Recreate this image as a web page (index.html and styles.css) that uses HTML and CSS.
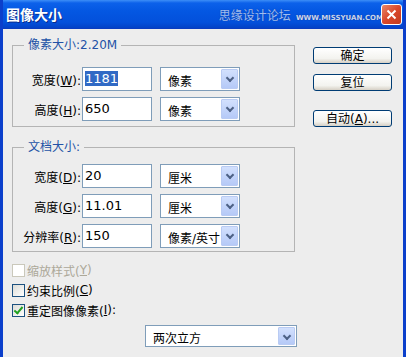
FILE: index.html
```html
<html>
<head>
    <title>图像大小</title>
    <meta charset="UTF-8"/>
    <link rel="stylesheet" href="styles.css">
</head>
<body>
<div class="window">
    <div class="titlebar">
        <span class="title">图像大小</span>
        <span class="mark">思缘设计论坛<small>WWW.MISSYUAN.COM</small></span>
        <span class="close">
            <svg width="11" height="11" viewBox="0 0 11 11"><path d="M1.5 1.5L9.5 9.5M9.5 1.5L1.5 9.5" stroke="#fff" stroke-width="2" fill="none"/></svg>
        </span>
    </div>
    <div class="content">
        <div class="main">
            <fieldset class="group g1">
                <legend>像素大小:2.20M</legend>
                <div class="row">
                    <label>宽度(<u>W</u>):</label>
                    <div class="field"><span class="hl">1181</span></div>
                    <div class="select"><span>像素</span><i class="arrow"></i></div>
                </div>
                <div class="row">
                    <label>高度(<u>H</u>):</label>
                    <div class="field">650</div>
                    <div class="select"><span>像素</span><i class="arrow"></i></div>
                </div>
            </fieldset>
            <fieldset class="group g2">
                <legend>文档大小:</legend>
                <div class="row">
                    <label>宽度(<u>D</u>):</label>
                    <div class="field">20</div>
                    <div class="select"><span>厘米</span><i class="arrow"></i></div>
                </div>
                <div class="row">
                    <label>高度(<u>G</u>):</label>
                    <div class="field">11.01</div>
                    <div class="select"><span>厘米</span><i class="arrow"></i></div>
                </div>
                <div class="row">
                    <label>分辨率(<u>R</u>):</label>
                    <div class="field">150</div>
                    <div class="select"><span>像素/英寸</span><i class="arrow"></i></div>
                </div>
            </fieldset>
            <div class="checks">
                <div class="check disabled"><i class="box"></i>缩放样式(<u>Y</u>)</div>
                <div class="check"><i class="box"></i>约束比例(<u>C</u>)</div>
                <div class="check"><i class="box on"></i>重定图像像素(<u>I</u>):</div>
            </div>
            <div class="select wide"><span>两次立方</span><i class="arrow"></i></div>
        </div>
        <div class="side">
            <button type="button">确定</button>
            <button type="button">复位</button>
            <button type="button" class="auto">自动(<u>A</u>)...</button>
        </div>
    </div>
</div>
</body>
</html>
```
FILE: styles.css
```css
html, body {
    margin: 0;
    padding: 0;
    background: #ededed;
}
body {
    font-family: "DejaVu Sans", "Noto Sans CJK SC", sans-serif;
    font-size: 12px;
    color: #000;
}
.window {
    width: 406px;
    height: 357px;
    box-sizing: border-box;
    border-left: 3px solid #0b3fcb;
    border-right: 3px solid #0b3fcb;
    background: #ededed;
    overflow: hidden;
}
.titlebar {
    height: 29px;
    margin: 0 -3px;
    padding: 0 4px 0 6px;
    display: flex;
    align-items: center;
    background: linear-gradient(#3d8ef7 0, #0c61ea 3px, #0457e2 40%, #0350db 80%, #0342c6 100%);
    border-bottom: 1px solid #0a3cc0;
    box-sizing: border-box;
}
.title {
    color: #fff;
    font-family: "Noto Sans CJK SC", sans-serif;
    font-weight: bold;
    font-size: 14px;
    text-shadow: 1px 1px 0 #0a2a8a;
}
.mark {
    margin-left: auto;
    color: #9fbdf2;
    font-family: "Noto Sans CJK SC", sans-serif;
    font-size: 12px;
    text-shadow: 0 0 1px #1a3a90;
    white-space: nowrap;
}
.mark small {
    font-family: "DejaVu Sans", sans-serif;
    font-size: 7px;
    font-weight: bold;
    color: #c6d4ee;
    margin-left: 5px;
}
.close {
    flex-shrink: 0;
    width: 19px;
    height: 19px;
    margin-left: -2px;
    border: 1px solid #fff;
    border-radius: 3px;
    background: linear-gradient(135deg, #e9886a, #d9472b 50%, #c23a1e);
    display: flex;
    align-items: center;
    justify-content: center;
}
.content {
    display: flex;
    padding: 9px 0 0 9px;
}
.main {
    width: 283px;
}
.group {
    margin: 0;
    padding: 15px 0 5px 0;
    border: 1px solid #b4b4b4;
}
.g2 {
    margin-top: 13px;
    padding-top: 10px;
    padding-bottom: 3px;
}
legend {
    margin-left: 11px;
    padding: 0 4px;
    color: #2352a6;
    line-height: 14px;
}
.row {
    display: flex;
    align-items: center;
    height: 24px;
}
.row + .row {
    margin-top: 6px;
}
label {
    width: 68px;
    text-align: right;
    margin-right: 1px;
    white-space: nowrap;
}
.field {
    width: 70px;
    height: 24px;
    box-sizing: border-box;
    border: 1px solid #7f9db9;
    background: #fff;
    padding: 3px 0 0 2px;
    font-size: 13px;
}
.hl {
    background: #316ac5;
    color: #fff;
}
.select {
    width: 80px;
    height: 24px;
    margin-left: 8px;
    box-sizing: border-box;
    border: 1px solid #7f9db9;
    background: #fff;
    display: flex;
    align-items: center;
    padding: 0 1px 0 7px;
    font-size: 12px;
    white-space: nowrap;
}
.select span {
    flex: 1;
    padding-top: 2px;
}
.arrow {
    flex-shrink: 0;
    width: 17px;
    height: 20px;
    box-sizing: border-box;
    border: 1px solid #b9cbf3;
    border-radius: 1px;
    background: linear-gradient(#d2e0fd, #b5c9f7);
    position: relative;
}
.arrow::after {
    content: "";
    position: absolute;
    left: 5px;
    top: 5px;
    width: 4px;
    height: 4px;
    border-right: 2px solid #4d6185;
    border-bottom: 2px solid #4d6185;
    transform: rotate(45deg);
}
.checks {
    margin-top: 8px;
}
.check {
    display: flex;
    align-items: center;
    height: 20px;
}
.box {
    width: 13px;
    height: 13px;
    box-sizing: border-box;
    border: 1px solid #1c5180;
    background: linear-gradient(135deg, #dcdcd7, #fff);
    margin-right: 2px;
    position: relative;
}
.box.on::after {
    content: "";
    position: absolute;
    left: 3px;
    top: 0;
    width: 3px;
    height: 7px;
    border-right: 2px solid #21a121;
    border-bottom: 2px solid #21a121;
    transform: rotate(40deg);
}
.disabled {
    color: #aca899;
}
.disabled .box {
    border-color: #cac8bb;
    background: #fff;
}
.select.wide {
    width: 152px;
    height: 22px;
    margin: 5px 0 0 133px;
}
.wide .arrow {
    height: 18px;
}
.side {
    margin-left: 18px;
    padding-top: 9px;
    display: flex;
    flex-direction: column;
}
button {
    width: 79px;
    height: 17px;
    padding: 0;
    border: 1px solid #003c74;
    border-radius: 3px;
    background: linear-gradient(#fff, #f3f3ef 70%, #d6d0c5);
    font-family: inherit;
    font-size: 12px;
    line-height: 14px;
    color: #000;
}
button + button {
    margin-top: 10px;
}
button.auto {
    margin-top: 19px;
}
```
